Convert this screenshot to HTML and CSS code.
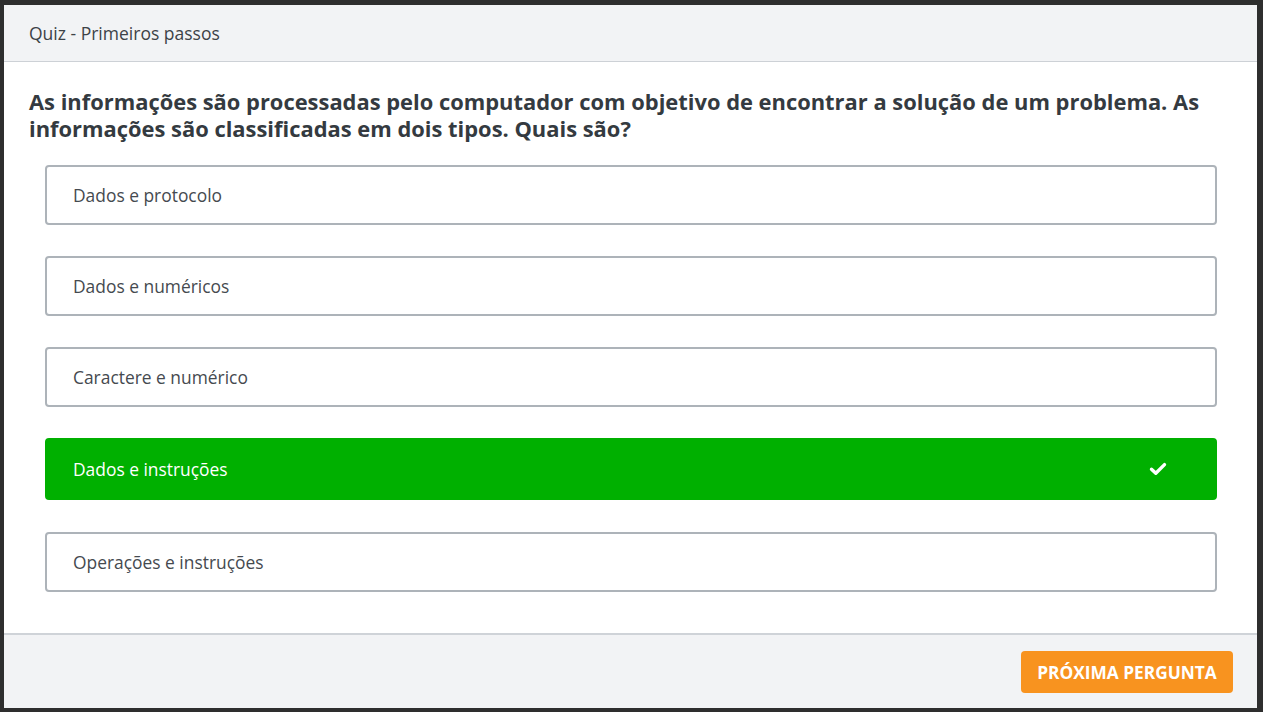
FILE: index.html
```html
<!DOCTYPE html>
<html lang="pt">
<head>
<meta charset="utf-8">
<title>Quiz - Primeiros passos</title>
<link rel="stylesheet" href="styles.css">
</head>
<body>
<div class="card">
  <header class="card-header">Quiz - Primeiros passos</header>
  <main class="card-body">
    <h1 class="question">As informações são processadas pelo computador com objetivo de encontrar a solução de um problema. As informações são classificadas em dois tipos. Quais são?</h1>
    <ul class="options">
      <li class="option">Dados e protocolo</li>
      <li class="option">Dados e numéricos</li>
      <li class="option">Caractere e numérico</li>
      <li class="option option-correct">
        <span>Dados e instruções</span>
        <svg class="check" viewBox="0 0 18 14" width="18" height="14" aria-hidden="true"><polyline points="2.5,7.2 6.8,11.3 15.5,2.6" fill="none" stroke="#fff" stroke-width="3.4" stroke-linecap="round" stroke-linejoin="round"/></svg>
      </li>
      <li class="option">Operações e instruções</li>
    </ul>
  </main>
  <footer class="card-footer">
    <button class="btn-next" type="button">PRÓXIMA PERGUNTA</button>
  </footer>
</div>
</body>
</html>
```

FILE: styles.css
```css
* { box-sizing: border-box; }

html, body { height: 100%; }

body {
  margin: 0;
  padding: 5px 6px 4px 4px;
  background: #2e2e2e;
  font-family: "Open Sans", "Noto Sans", sans-serif;
  color: #343a40;
}

.card {
  height: 100%;
  background: #fff;
  display: flex;
  flex-direction: column;
}

.card-header {
  height: 57px;
  flex: none;
  background: #f2f3f5;
  border-bottom: 1px solid #cdd1d6;
  padding: 0 25px;
  display: flex;
  align-items: center;
  font-size: 17.5px;
  color: #3d4247;
}

.card-body {
  flex: 1;
  padding: 26px 25px 0 25px;
}

.question {
  margin: 0 0 23px 0;
  font-size: 21.9px;
  line-height: 27px;
  font-weight: 700;
  color: #343a40;
}

.options {
  list-style: none;
  margin: 0;
  padding: 0 15px 0 16px;
  display: flex;
  flex-direction: column;
  gap: 31px;
}

.option {
  height: 60px;
  border: 2px solid #adb3b9;
  border-radius: 4px;
  padding: 0 26px;
  display: flex;
  align-items: center;
  justify-content: space-between;
  font-size: 17.4px;
  color: #454a4f;
}

.option-correct {
  height: 62px;
  background: #00b000;
  border-color: #00b000;
  color: #fff;
  padding: 0 48px 0 26px;
}

.option:last-child { margin-top: 1px; }

.check { display: block; }

.card-footer {
  flex: none;
  height: 75px;
  background: #f2f3f5;
  border-top: 2px solid #cfd3d8;
  display: flex;
  justify-content: flex-end;
  align-items: center;
  padding: 0 24px 0 0;
}

.btn-next {
  width: 212px;
  height: 42px;
  border: none;
  border-radius: 4px;
  background: #f8931f;
  color: #fff;
  font-family: "Open Sans", "Noto Sans", sans-serif;
  font-size: 17.3px;
  font-weight: 700;
  margin-top: 1px;
}
```
